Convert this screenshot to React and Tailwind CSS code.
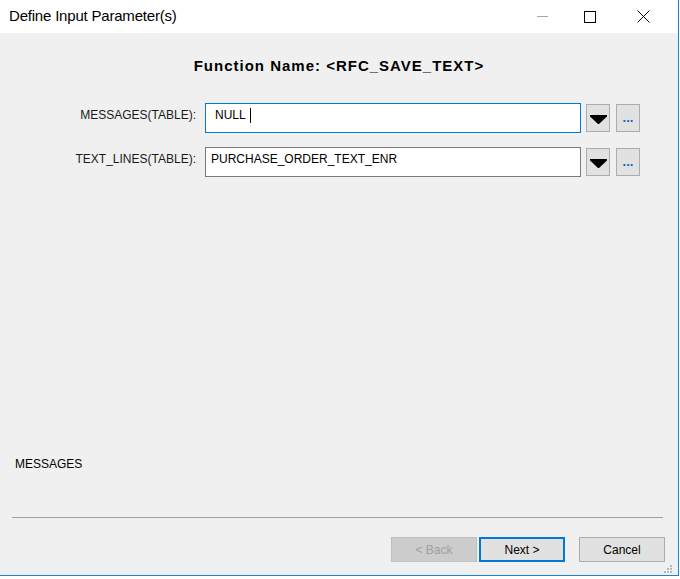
import React from 'react'

const ui = { fontFamily: '"Liberation Sans", Arial, sans-serif' }

function DropArrow() {
  return (
    <svg width="17" height="9" viewBox="0 0 17 9">
      <polygon points="0,0 17,0 17,1.5 9,9 8,9 0,1.5" fill="#000" />
    </svg>
  )
}

function ResizeGrip() {
  const dots = [
    [6, 0], [3, 3], [6, 3], [0, 6], [3, 6], [6, 6],
  ]
  return (
    <svg width="8" height="8" viewBox="0 0 8 8">
      {dots.map(([x, y], i) => (
        <rect key={i} x={x} y={y} width="2" height="2" fill="#b8b8b8" />
      ))}
    </svg>
  )
}

function ParamRow({ label, value, focused, textPad }) {
  return (
    <div className="flex items-center h-[30px]">
      <div className="w-[197px] pr-[1px] pb-[7px] text-right text-[12px] text-[#1a1a1a]">{label}</div>
      <div
        className={`ml-[8px] w-[376px] h-[30px] bg-white flex items-center pb-[6px] text-[12px] text-black border ${
          focused ? 'border-[#0078d7]' : 'border-[#7a7a7a]'
        } ${textPad}`}
      >
        <span>{value}</span>
        {focused && <span className="ml-[4px] inline-block w-px h-[15px] bg-black" />}
      </div>
      <button className="ml-[5px] w-[24px] h-[28px] bg-[#e1e1e1] border border-[#adadad] flex items-center justify-center pt-[3px]">
        <DropArrow />
      </button>
      <button className="ml-[6px] w-[24px] h-[28px] bg-[#e1e1e1] border border-[#adadad] flex items-center justify-center">
        <span className="text-[#0a64c8] text-[13px] font-bold leading-none -mt-[2px]">...</span>
      </button>
    </div>
  )
}

export default function App() {
  return (
    <div className="w-[680px] h-[579px] bg-white" style={ui}>
      <div className="relative w-[679px] h-[576px] border-r border-b border-[#1883d7] flex flex-col bg-[#f0f0f0]">
        {/* title bar */}
        <div className="h-[33px] bg-white flex items-center shrink-0">
          <span className="ml-[9px] text-[15px] text-black tracking-[-0.2px]">Define Input Parameter(s)</span>
          <div className="ml-auto flex items-center h-full">
            <div className="w-[46px] h-full flex items-center justify-center">
              <span className="block w-[11px] h-px bg-[#a6a6a6] mr-[3px]" />
            </div>
            <div className="w-[46px] h-full flex items-center justify-center">
              <span className="block w-[12px] h-[12px] border border-black" />
            </div>
            <div className="w-[46px] h-full flex items-center justify-center ml-[7px] mr-[12px]">
              <svg width="13" height="13" viewBox="0 0 13 13">
                <path d="M0.5 0.5 L12.5 12.5 M12.5 0.5 L0.5 12.5" stroke="#000" strokeWidth="1" />
              </svg>
            </div>
          </div>
        </div>

        {/* body */}
        <div className="flex-1 flex flex-col pt-[23px] pb-[13px]">
          <div className="h-[20px] flex items-center justify-center text-[15px] font-bold tracking-[1px] text-black">
            Function Name: &lt;RFC_SAVE_TEXT&gt;
          </div>
          <div className="mt-[27px] flex flex-col gap-[14px]">
            <ParamRow label="MESSAGES(TABLE):" value="NULL" focused textPad="pl-[9px]" />
            <ParamRow label="TEXT_LINES(TABLE):" value="PURCHASE_ORDER_TEXT_ENR" textPad="pl-[5px]" />
          </div>
          <div className="flex-1" />
          <div className="h-[16px] flex items-center pl-[15px] text-[12px] text-black">MESSAGES</div>
          <div className="mt-[45px] ml-[12px] mr-[15px] h-px bg-[#a0a0a0]" />
          <div className="mt-[19px] flex items-center">
            <button className="ml-[391px] w-[86px] h-[25px] bg-[#cccccc] border border-[#bfbfbf] text-[12px] text-[#a0a0a0]">
              &lt; Back
            </button>
            <button className="ml-[2px] w-[86px] h-[25px] bg-[#e1e1e1] border-2 border-[#0078d7] text-[12px] text-black">
              Next &gt;
            </button>
            <button className="ml-[14px] w-[86px] h-[25px] bg-[#e1e1e1] border border-[#adadad] text-[12px] text-black">
              Cancel
            </button>
          </div>
        </div>
        <div className="absolute right-[6px] bottom-[2px]">
          <ResizeGrip />
        </div>
      </div>
    </div>
  )
}
